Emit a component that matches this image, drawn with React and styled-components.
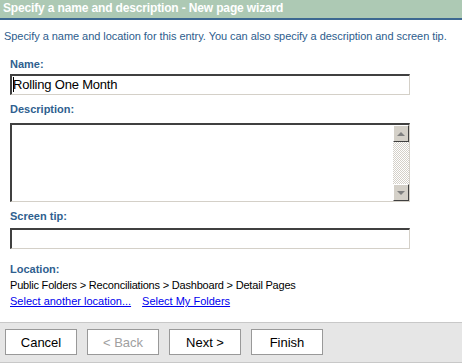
import React from "react";
import styled, { createGlobalStyle } from "styled-components";

const Global = createGlobalStyle`
  html, body {
    margin: 0;
    padding: 0;
    background: #ffffff;
  }
  body {
    font-family: Tahoma, "DejaVu Sans", "Liberation Sans", sans-serif;
  }
`;

const Page = styled.div`
  width: 462px;
  height: 364px;
  display: flex;
  flex-direction: column;
  overflow: hidden;
`;

const Header = styled.div`
  height: 18px;
  background: #adc9b4;
  border-bottom: 2px solid #3d6891;
  color: #ffffff;
  font-family: "Liberation Sans", sans-serif;
  font-weight: bold;
  font-size: 12px;
  line-height: 16px;
  letter-spacing: -0.15px;
  padding-left: 3px;
  white-space: nowrap;
`;

const Intro = styled.p`
  margin: 10px 0 0 4px;
  color: #2d5d8d;
  font-family: "Liberation Sans", sans-serif;
  font-size: 11px;
  line-height: 13px;
  letter-spacing: -0.05px;
  white-space: nowrap;
`;

const Body = styled.div`
  flex: 1;
  padding: 0 0 0 10px;
  display: flex;
  flex-direction: column;
`;

const Label = styled.div`
  color: #2f5f8f;
  font-family: "Liberation Sans", sans-serif;
  font-weight: bold;
  font-size: 11px;
  line-height: 13px;
  margin-top: ${(p) => p.$top}px;
  margin-bottom: ${(p) => p.$bottom ?? 3}px;
`;

const Input = styled.div`
  box-sizing: border-box;
  width: 400px;
  height: 21px;
  border-top: 2px solid #404040;
  border-left: 2px solid #404040;
  border-right: 1px solid #d4d0c8;
  border-bottom: 1px solid #d4d0c8;
  background: #ffffff;
  font-family: "Liberation Sans", sans-serif;
  font-size: 13px;
  line-height: 17px;
  letter-spacing: -0.2px;
  padding-left: 1px;
  color: #000;
  white-space: nowrap;
`;

const Caret = styled.span`
  display: inline-block;
  width: 1px;
  height: 15px;
  background: #000;
  vertical-align: -3px;
  margin-right: -1px;
`;

const Area = styled(Input)`
  height: 79px;
  display: flex;
  justify-content: flex-end;
  padding: 0;
`;

const Scroll = styled.div`
  width: 16px;
  display: flex;
  flex-direction: column;
`;

const Track = styled.div`
  flex: 1;
  background-color: #ffffff;
  background-image: repeating-conic-gradient(#d4d0c8 0 25%, #ffffff 0 50%);
  background-size: 2px 2px;
`;

const ArrowBtn = styled.div`
  box-sizing: border-box;
  height: 17px;
  background: #d4d0c8;
  border-top: 1px solid #ffffff;
  border-left: 1px solid #ffffff;
  border-right: 1px solid #404040;
  border-bottom: 1px solid #404040;
  display: flex;
  align-items: center;
  justify-content: center;
  &::after {
    content: "";
    width: 0;
    height: 0;
    border-left: 4px solid transparent;
    border-right: 4px solid transparent;
    ${(p) =>
      p.$down
        ? "border-top: 4px solid #808080;"
        : "border-bottom: 4px solid #808080;"}
  }
`;

const PathText = styled.div`
  font-family: "Liberation Sans", sans-serif;
  font-size: 11px;
  line-height: 14px;
  letter-spacing: -0.2px;
  color: #000;
  margin-top: 1px;
  white-space: nowrap;
`;

const Links = styled.div`
  display: flex;
  gap: 11px;
  margin-top: 2px;
`;

const Link = styled.a`
  font-family: "Liberation Sans", sans-serif;
  font-size: 11px;
  line-height: 14px;
  color: #0000ee;
  text-decoration: underline;
  white-space: nowrap;
`;

const Footer = styled.div`
  box-sizing: border-box;
  height: 41px;
  margin-bottom: 1px;
  background: #e6e6e6;
  border-top: 1px solid #c8c8c8;
  border-bottom: 1px solid #c8c8c8;
  display: flex;
  align-items: flex-start;
  gap: 10px;
  padding: 6px 0 0 5px;
`;

const Button = styled.div`
  box-sizing: border-box;
  width: 72px;
  height: 26px;
  background: #ffffff;
  border: 1px solid #999999;
  display: flex;
  align-items: center;
  justify-content: center;
  font-family: "Liberation Sans", sans-serif;
  font-size: 13px;
  color: ${(p) => (p.$disabled ? "#a0a0a0" : "#000000")};
`;

export default function App() {
  return (
    <Page>
      <Global />
      <Header>Specify a name and description - New page wizard</Header>
      <Intro>
        Specify a name and location for this entry. You can also specify a
        description and screen tip.
      </Intro>
      <Body>
        <Label $top={15}>Name:</Label>
        <Input>
          <Caret />
          Rolling One Month
        </Input>
        <Label $top={8} $bottom={7}>Description:</Label>
        <Area>
          <Scroll>
            <ArrowBtn />
            <Track />
            <ArrowBtn $down />
          </Scroll>
        </Area>
        <Label $top={8} $bottom={5}>Screen tip:</Label>
        <Input />
        <Label $top={14} $bottom={1}>Location:</Label>
        <PathText>
          Public Folders &gt; Reconciliations &gt; Dashboard &gt; Detail Pages
        </PathText>
        <Links>
          <Link href="#">Select another location...</Link>
          <Link href="#">Select My Folders</Link>
        </Links>
      </Body>
      <Footer>
        <Button>Cancel</Button>
        <Button $disabled>&lt; Back</Button>
        <Button>Next &gt;</Button>
        <Button>Finish</Button>
      </Footer>
    </Page>
  );
}
